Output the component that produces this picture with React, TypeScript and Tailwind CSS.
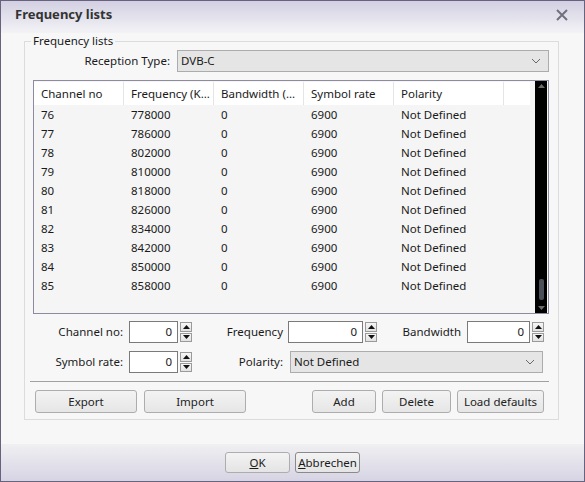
import React from "react";

const font = { fontFamily: '"Noto Sans", "Open Sans", sans-serif' };

const rows = [
  [76, 778000],
  [77, 786000],
  [78, 802000],
  [79, 810000],
  [80, 818000],
  [81, 826000],
  [82, 834000],
  [83, 842000],
  [84, 850000],
  [85, 858000],
];

function SpinButtons() {
  return (
    <div className="flex flex-col gap-[1px] w-[12px] h-[22px] py-[1px]">
      <div className="flex-1 border border-[#9a9a9a] bg-gradient-to-b from-[#f6f6f6] to-[#e2e2e2] flex items-center justify-center">
        <svg width="7" height="4" viewBox="0 0 7 4"><path d="M0 4 L3.5 0 L7 4 Z" fill="#111" /></svg>
      </div>
      <div className="flex-1 border border-[#9a9a9a] bg-gradient-to-b from-[#f6f6f6] to-[#e2e2e2] flex items-center justify-center">
        <svg width="7" height="4" viewBox="0 0 7 4"><path d="M0 0 L3.5 4 L7 0 Z" fill="#111" /></svg>
      </div>
    </div>
  );
}

function Chevron() {
  return (
    <svg width="10" height="6" viewBox="0 0 10 6" className="shrink-0">
      <path d="M1 1 L5 5 L9 1" fill="none" stroke="#6a6a6a" strokeWidth="1" />
    </svg>
  );
}

function Btn({ children, w }: { children: React.ReactNode; w: string }) {
  return (
    <div
      className={`${w} h-[23px] border border-[#adadad] rounded-[3px] bg-gradient-to-b from-[#f3f3f3] to-[#e6e6e6] flex items-center justify-center text-[11.5px] text-[#222]`}
    >
      {children}
    </div>
  );
}

export default function App() {
  return (
    <div
      className="w-[585px] h-[482px] border border-[#67637f] bg-[#f7f7f7] flex flex-col text-[#1a1a1a] overflow-hidden"
      style={font}
    >
      {/* Title bar */}
      <div className="h-[32px] shrink-0 bg-gradient-to-b from-[#d2d0e2] to-[#f3f3f6] flex items-start justify-between pl-[14px] pr-[16px] pt-[3px]">
        <div className="text-[13px] font-bold text-[#333] leading-[20px]">Frequency lists</div>
        <svg width="12" height="12" viewBox="0 0 12 12" className="mt-[5px]">
          <path d="M1 1 L11 11 M11 1 L1 11" stroke="#707080" strokeWidth="2" />
        </svg>
      </div>

      {/* Group box */}
      <fieldset className="ml-[23px] w-[530px] border border-[#dcdcdc] pl-[8px] pr-[9px] pt-[1px] pb-[6px]">
        <legend className="-ml-[2px] px-[2px] text-[11.5px] leading-[16px] text-[#1a1a1a]">Frequency lists</legend>

        {/* Reception type */}
        <div className="flex items-center h-[22px]">
          <div className="w-[138px] text-right text-[11.5px] pr-[1px]">Reception Type:</div>
          <div className="ml-[6px] flex-1 h-[22px] border border-[#acacac] bg-[#e5e5e5] flex items-center justify-between pl-[3px] pr-[7px] text-[11.5px]">
            <span>DVB-C</span>
            <Chevron />
          </div>
        </div>

        {/* Table */}
        <div className="mt-[8px] h-[234px] border border-[#8e8aa0] bg-[#f5f5f5] flex">
          <div className="flex-1 flex flex-col">
            <div className="h-[23px] flex items-stretch bg-white mt-[1px] mr-[5px] text-[11.5px]">
              <div className="w-[90px] border-r border-[#e5e5e5] pl-[7px] flex items-center">Channel no</div>
              <div className="w-[90px] border-r border-[#e5e5e5] pl-[7px] flex items-center whitespace-nowrap">Frequency (K...</div>
              <div className="w-[90px] border-r border-[#e5e5e5] pl-[7px] flex items-center whitespace-nowrap">Bandwidth (...</div>
              <div className="w-[90px] border-r border-[#e5e5e5] pl-[7px] flex items-center">Symbol rate</div>
              <div className="w-[110px] border-r border-[#e5e5e5] pl-[7px] flex items-center">Polarity</div>
              <div className="flex-1" />
            </div>
            <div className="flex flex-col">
              {rows.map(([ch, f]) => (
                <div key={ch} className="h-[19px] flex items-center text-[11.5px]">
                  <div className="w-[90px] pl-[7px]">{ch}</div>
                  <div className="w-[90px] pl-[7px]">{f}</div>
                  <div className="w-[90px] pl-[7px]">0</div>
                  <div className="w-[90px] pl-[7px]">6900</div>
                  <div className="w-[110px] pl-[7px]">Not Defined</div>
                </div>
              ))}
            </div>
          </div>
          {/* Scrollbar */}
          <div className="w-[12px] bg-black flex flex-col items-center justify-between py-[3px] mr-[1px]">
            <svg width="7" height="4" viewBox="0 0 7 4"><path d="M0 4 L3.5 0 L7 4 Z" fill="#6b6b6b" /></svg>
            <div className="flex-1" />
            <div className="w-[5px] h-[21px] rounded-[2px] bg-[#4b5058] mb-[6px]" />
            <svg width="7" height="4" viewBox="0 0 7 4"><path d="M0 0 L3.5 4 L7 0 Z" fill="#6b6b6b" /></svg>
          </div>
        </div>

        {/* Row 1 */}
        <div className="mt-[7px] flex items-center h-[22px] text-[11.5px]">
          <div className="w-[90px] text-right">Channel no:</div>
          <div className="ml-[6px] w-[49px] h-[22px] border border-[#7a7a7a] bg-white flex items-center justify-end pr-[5px]">0</div>
          <div className="ml-[2px]"><SpinButtons /></div>
          <div className="w-[91px] text-right">Frequency</div>
          <div className="ml-[5px] w-[75px] h-[22px] border border-[#7a7a7a] bg-white flex items-center justify-end pr-[5px]">0</div>
          <div className="ml-[2px]"><SpinButtons /></div>
          <div className="w-[84px] text-right">Bandwidth</div>
          <div className="ml-[6px] w-[63px] h-[22px] border border-[#7a7a7a] bg-white flex items-center justify-end pr-[5px]">0</div>
          <div className="ml-[2px]"><SpinButtons /></div>
        </div>

        {/* Row 2 */}
        <div className="mt-[8px] flex items-center h-[22px] text-[11.5px]">
          <div className="w-[90px] text-right">Symbol rate:</div>
          <div className="ml-[6px] w-[49px] h-[22px] border border-[#7a7a7a] bg-white flex items-center justify-end pr-[5px]">0</div>
          <div className="ml-[2px]"><SpinButtons /></div>
          <div className="w-[91px] text-right">Polarity:</div>
          <div className="ml-[7px] w-[253px] h-[22px] border border-[#acacac] bg-[#e5e5e5] flex items-center justify-between pl-[3px] pr-[7px]">
            <span>Not Defined</span>
            <Chevron />
          </div>
        </div>

        {/* Separator */}
        <div className="mt-[8px] -ml-[3px] w-[519px] h-[1px] bg-[#a0a0a0]" />

        {/* Buttons */}
        <div className="mt-[8px] flex items-center">
          <div className="ml-[2px]"><Btn w="w-[102px]">Export</Btn></div>
          <div className="ml-[7px]"><Btn w="w-[102px]">Import</Btn></div>
          <div className="ml-[66px]"><Btn w="w-[64px]">Add</Btn></div>
          <div className="ml-[6px]"><Btn w="w-[69px]">Delete</Btn></div>
          <div className="ml-[6px]"><Btn w="w-[87px]">Load defaults</Btn></div>
        </div>
      </fieldset>

      {/* Footer */}
      <div className="mt-auto h-[37px] shrink-0 bg-gradient-to-b from-[#f0f0f2] to-[#d6d4e4] flex justify-center items-start pt-[8px] gap-[5px]">
        <div className="w-[65px] h-[21px] border border-[#adadad] rounded-[3px] bg-gradient-to-b from-[#f3f3f3] to-[#e4e4e4] flex items-center justify-center text-[11.5px]">
          <span><span className="underline">O</span>K</span>
        </div>
        <div className="w-[65px] h-[21px] border border-[#8a8a8a] rounded-[3px] bg-gradient-to-b from-[#f3f3f3] to-[#e4e4e4] flex items-center justify-center text-[11.5px]">
          <span><span className="underline">A</span>bbrechen</span>
        </div>
      </div>
    </div>
  );
}
